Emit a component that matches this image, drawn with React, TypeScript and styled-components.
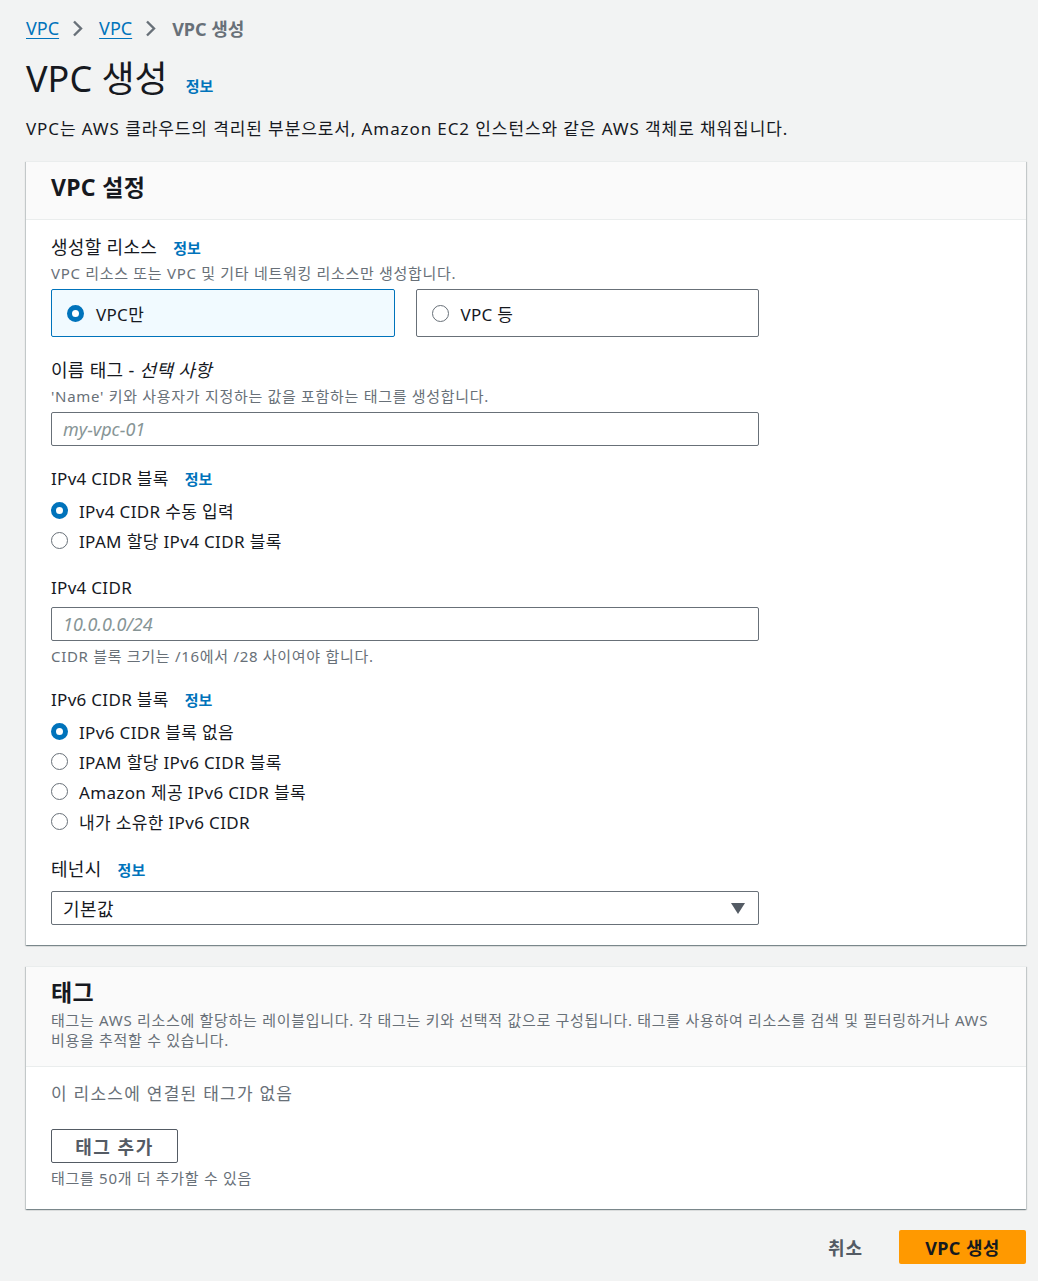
import React, { FC, useState } from 'react';
import styled, { createGlobalStyle } from 'styled-components';

const GlobalStyle = createGlobalStyle`
  body {
    margin: 0;
    background: #f2f3f3;
    font-family: 'Noto Sans', 'Noto Sans CJK KR', sans-serif;
    color: #16191f;
  }
  * { box-sizing: border-box; }
`;

const Radio: FC<{ checked: boolean }> = ({ checked }) => <RadioDot checked={checked} />;

const InfoLink: FC = () => <Info href='#'>정보</Info>;

const App: FC = () => {
  const [resource, setResource] = useState('vpc');
  const [ipv4, setIpv4] = useState(0);
  const [ipv6, setIpv6] = useState(0);

  const ipv4Options = ['IPv4 CIDR 수동 입력', 'IPAM 할당 IPv4 CIDR 블록'];
  const ipv6Options = [
    'IPv6 CIDR 블록 없음',
    'IPAM 할당 IPv6 CIDR 블록',
    'Amazon 제공 IPv6 CIDR 블록',
    '내가 소유한 IPv6 CIDR',
  ];

  return (
    <Page>
      <GlobalStyle />
      <Breadcrumbs>
        <Crumb href='#'>VPC</Crumb>
        <Chevron />
        <Crumb href='#'>VPC</Crumb>
        <Chevron />
        <CurrentCrumb>VPC 생성</CurrentCrumb>
      </Breadcrumbs>

      <TitleRow>
        <Title>VPC 생성</Title>
        <InfoLink />
      </TitleRow>
      <PageDescription>
        VPC는 AWS 클라우드의 격리된 부분으로서, Amazon EC2 인스턴스와 같은 AWS 객체로 채워집니다.
      </PageDescription>

      <Card>
        <CardHeader>
          <CardTitle>VPC 설정</CardTitle>
        </CardHeader>
        <CardBody>
          <Field>
            <LabelRow>
              <BigLabel>생성할 리소스</BigLabel>
              <InfoLink />
            </LabelRow>
            <Hint>VPC 리소스 또는 VPC 및 기타 네트워킹 리소스만 생성합니다.</Hint>
            <Tiles>
              <Tile selected={resource === 'vpc'} onClick={() => setResource('vpc')}>
                <Radio checked={resource === 'vpc'} />
                VPC만
              </Tile>
              <Tile selected={resource === 'more'} onClick={() => setResource('more')}>
                <Radio checked={resource === 'more'} />
                VPC 등
              </Tile>
            </Tiles>
          </Field>

          <Field>
            <BigLabel>
              이름 태그 - <em>선택 사항</em>
            </BigLabel>
            <Hint>'Name' 키와 사용자가 지정하는 값을 포함하는 태그를 생성합니다.</Hint>
            <Input placeholder='my-vpc-01' gap={5} />
          </Field>

          <Field>
            <LabelRow>
              <Label>IPv4 CIDR 블록</Label>
              <InfoLink />
            </LabelRow>
            <RadioList>
              {ipv4Options.map((o, i) => (
                <RadioItem key={o} onClick={() => setIpv4(i)}>
                  <Radio checked={ipv4 === i} />
                  {o}
                </RadioItem>
              ))}
            </RadioList>
          </Field>

          <Field>
            <Label>IPv4 CIDR</Label>
            <Input placeholder='10.0.0.0/24' gap={6} />
            <Hint spaced>CIDR 블록 크기는 /16에서 /28 사이여야 합니다.</Hint>
          </Field>

          <Field>
            <LabelRow>
              <Label>IPv6 CIDR 블록</Label>
              <InfoLink />
            </LabelRow>
            <RadioList>
              {ipv6Options.map((o, i) => (
                <RadioItem key={o} onClick={() => setIpv6(i)}>
                  <Radio checked={ipv6 === i} />
                  {o}
                </RadioItem>
              ))}
            </RadioList>
          </Field>

          <Field>
            <LabelRow>
              <BigLabel>테넌시</BigLabel>
              <InfoLink />
            </LabelRow>
            <Select>
              기본값
              <svg width='14' height='11' viewBox='0 0 14 11'>
                <path d='M0 0h14L7 11z' fill='#545b64' />
              </svg>
            </Select>
          </Field>
        </CardBody>
      </Card>

      <Card>
        <CardHeader>
          <CardTitle>태그</CardTitle>
          <HeaderDescription>
            태그는 AWS 리소스에 할당하는 레이블입니다. 각 태그는 키와 선택적 값으로 구성됩니다. 태그를 사용하여 리소스를 검색 및 필터링하거나 AWS
            <br />
            비용을 추적할 수 있습니다.
          </HeaderDescription>
        </CardHeader>
        <CardBody>
          <Empty>이 리소스에 연결된 태그가 없음</Empty>
          <SecondaryButton>태그 추가</SecondaryButton>
          <Hint spaced>태그를 50개 더 추가할 수 있음</Hint>
        </CardBody>
      </Card>

      <Actions>
        <LinkButton>취소</LinkButton>
        <PrimaryButton>VPC 생성</PrimaryButton>
      </Actions>
    </Page>
  );
};

export default App;

const Chevron: FC = () => (
  <ChevronIcon width='11' height='17' viewBox='0 0 11 17'>
    <path d='M2 1.5l7 7-7 7' fill='none' stroke='#687078' strokeWidth='2.4' />
  </ChevronIcon>
);

const Page = styled.div`
  padding: 14px 12px 19px 26px;
  min-height: 1281px;
`;

const Breadcrumbs = styled.nav`
  display: flex;
  align-items: center;
  font-size: 18px;
  height: 28px;
`;

const Crumb = styled.a`
  color: #0073bb;
  text-decoration: underline;
  text-underline-offset: 3px;
`;

const ChevronIcon = styled.svg`
  margin: 0 16px 0 13px;
`;

const CurrentCrumb = styled.span`
  color: #687078;
  font-weight: 700;
`;

const TitleRow = styled.div`
  display: flex;
  align-items: baseline;
  gap: 18px;
  margin-top: 15px;
`;

const Title = styled.h1`
  margin: 0;
  font-size: 36px;
  font-weight: 400;
  line-height: 44px;
`;

const Info = styled.a`
  color: #0073bb;
  font-size: 15px;
  font-weight: 700;
  text-decoration: none;
`;

const PageDescription = styled.p`
  margin: 15px 0 19px;
  font-size: 17px;
  line-height: 26px;
  letter-spacing: 0.9px;
`;

const Card = styled.section`
  background: #fff;
  box-shadow: 0 1px 1px 0 rgba(0, 28, 36, 0.3), 1px 1px 1px 0 rgba(0, 28, 36, 0.15),
    -1px 1px 1px 0 rgba(0, 28, 36, 0.15);
  border-top: 1px solid #eaeded;
  margin-bottom: 21px;
`;

const CardHeader = styled.header`
  background: #fafafa;
  border-bottom: 1px solid #eaeded;
  padding: 9px 25px 16px;
`;

const CardTitle = styled.h2`
  margin: 0;
  font-size: 23px;
  font-weight: 700;
  line-height: 32px;
  letter-spacing: 0.3px;
`;

const HeaderDescription = styled.p`
  margin: 2px 0 0;
  font-size: 15px;
  line-height: 20px;
  letter-spacing: 0.7px;
  color: #687078;
  white-space: nowrap;
`;

const CardBody = styled.div`
  padding: 14px 25px 20px;
  max-width: 758px;
`;

const Field = styled.div`
  margin-bottom: 20px;
  &:last-child {
    margin-bottom: 0;
  }
`;

const LabelRow = styled.div`
  display: flex;
  align-items: baseline;
  gap: 16px;
`;

const BigLabel = styled.label`
  display: block;
  font-size: 18px;
  line-height: 26px;
  letter-spacing: 0.3px;
  color: #16191f;
  em {
    font-style: italic;
  }
`;

const Label = styled.label`
  display: block;
  font-size: 17px;
  line-height: 26px;
  letter-spacing: 0.3px;
`;

const Hint = styled.div<{ spaced?: boolean }>`
  margin-top: ${(p) => (p.spaced ? '4px' : '2px')};
  font-size: 15px;
  line-height: 22px;
  letter-spacing: 0.7px;
  color: #687078;
`;

const Tiles = styled.div`
  display: grid;
  grid-template-columns: 1fr 1fr;
  gap: 21px;
  margin-top: 5px;
`;

const Tile = styled.div<{ selected: boolean }>`
  display: flex;
  align-items: center;
  gap: 12px;
  height: 48px;
  padding: 0 15px;
  font-size: 17px;
  letter-spacing: 0.3px;
  border: 1px solid ${(p) => (p.selected ? '#0073bb' : '#687078')};
  background: ${(p) => (p.selected ? '#f1faff' : '#fff')};
  border-radius: 2px;
  cursor: pointer;
`;

const RadioDot = styled.span<{ checked: boolean }>`
  display: inline-block;
  flex: none;
  width: 17px;
  height: 17px;
  border-radius: 50%;
  background: #fff;
  border: ${(p) => (p.checked ? '5px solid #0073bb' : '1.5px solid #687078')};
`;

const Input = styled.input<{ gap: number }>`
  display: block;
  width: 100%;
  height: 34px;
  margin-top: ${(p) => p.gap}px;
  padding: 0 11px;
  border: 1px solid #687078;
  border-radius: 2px;
  font-family: inherit;
  font-size: 18px;
  color: #16191f;
  &::placeholder {
    color: #879596;
    font-style: italic;
  }
`;

const RadioList = styled.div`
  display: flex;
  flex-direction: column;
  margin-top: 3px;
`;

const RadioItem = styled.div`
  display: flex;
  align-items: center;
  gap: 11px;
  height: 30px;
  font-size: 17px;
  letter-spacing: 0.35px;
  cursor: pointer;
`;

const Select = styled.div`
  display: flex;
  align-items: center;
  justify-content: space-between;
  height: 34px;
  margin-top: 9px;
  padding: 0 13px 0 11px;
  border: 1px solid #687078;
  border-radius: 2px;
  font-size: 18px;
  letter-spacing: 0.4px;
`;

const Empty = styled.div`
  font-size: 17px;
  line-height: 26px;
  letter-spacing: 1.25px;
  color: #687078;
  margin-bottom: 22px;
`;

const SecondaryButton = styled.button`
  display: block;
  width: 127px;
  height: 34px;
  border: 1px solid #545b64;
  border-radius: 2px;
  background: #fff;
  color: #545b64;
  font-family: inherit;
  font-size: 18px;
  font-weight: 700;
  letter-spacing: 1.5px;
`;

const Actions = styled.div`
  display: flex;
  justify-content: flex-end;
  align-items: center;
  gap: 36px;
`;

const LinkButton = styled.button`
  border: none;
  background: none;
  color: #545b64;
  font-family: inherit;
  font-size: 18px;
  font-weight: 700;
  letter-spacing: 1px;
  padding: 0;
`;

const PrimaryButton = styled.button`
  width: 127px;
  height: 34px;
  border: none;
  border-radius: 2px;
  background: #ff9900;
  color: #16191f;
  font-family: inherit;
  font-size: 18px;
  font-weight: 700;
  letter-spacing: 0.4px;
`;
